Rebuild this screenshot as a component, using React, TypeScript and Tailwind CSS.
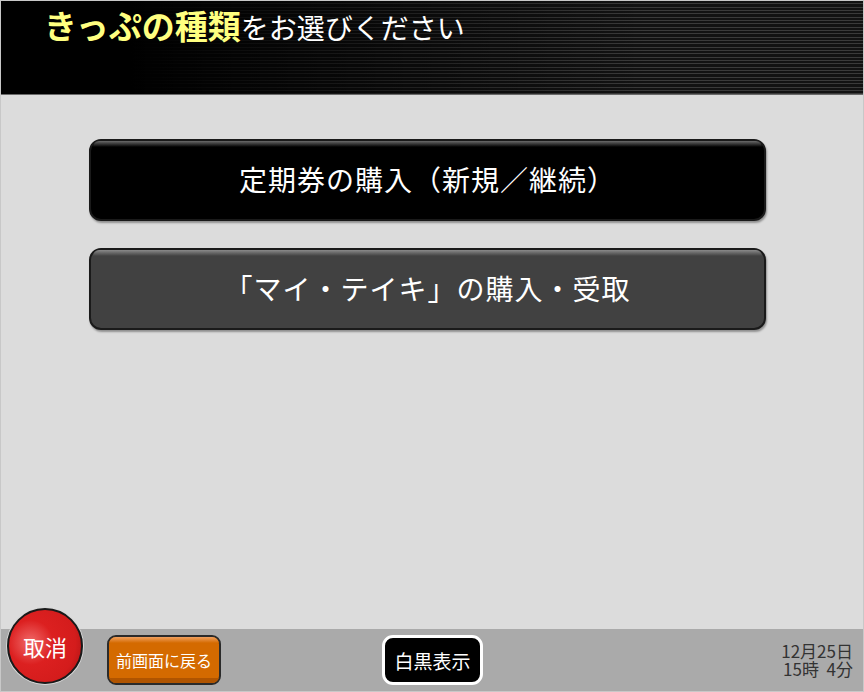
import React from 'react';

const jp = "font-['Noto_Sans_CJK_JP','Noto_Sans',sans-serif]";

const MenuButton: React.FC<{ label: string; dark?: boolean }> = ({ label, dark }) => (
  <button
    className={`relative h-[82px] w-full rounded-[12px] border-2 border-[#1a1a1a] shadow-[1px_2px_2px_rgba(0,0,0,0.35)] ${
      dark ? 'bg-black' : 'bg-[#414141]'
    }`}
  >
    {/* top highlight */}
    <div
      className={`absolute inset-x-[2px] top-0 h-[6px] rounded-t-[10px] ${
        dark ? 'bg-[linear-gradient(to_bottom,#6a6a6a,#000)]' : 'bg-[linear-gradient(to_bottom,#8a8a8a,#414141)]'
      }`}
    ></div>
    <span className="relative text-[28px] leading-none tracking-[1px] text-white">{label}</span>
  </button>
);

export default function App() {
  return (
    <div className={`flex h-[692px] w-[864px] flex-col border border-[#c8c8c8] bg-[#dcdcdc] ${jp}`}>
      {/* Header */}
      <div className="h-[94px] shrink-0 border-b border-[#6a6a6a] bg-[linear-gradient(to_right,#000_15%,rgba(0,0,0,0)_75%),repeating-linear-gradient(to_bottom,#121212_0px,#121212_2.3px,#3a3a3a_2.3px,#3a3a3a_3.33px)] pl-[43px] pt-[4px]">
        <h1 className="flex items-baseline leading-[40px]">
          <span className="text-[33px] font-bold text-[#ffff80]">きっぷの種類</span>
          <span className="text-[28px] text-white">をお選びください</span>
        </h1>
      </div>

      {/* Menu */}
      <div className="flex flex-1 flex-col gap-[27px] pl-[88px] pr-[97px] pt-[44px]">
        <MenuButton label="定期券の購入（新規／継続）" dark />
        <MenuButton label="「マイ・テイキ」の購入・受取" />
      </div>

      {/* Footer */}
      <div className="relative flex h-[62px] shrink-0 items-center bg-[#aaaaaa] pr-[10px]">
        <button className="absolute left-[6px] top-[-21px] flex h-[76px] w-[76px] items-center justify-center rounded-full border-[2px] border-[#1a1a1a] bg-[radial-gradient(circle_at_30%_45%,#f06a6a_0%,#dc2020_35%,#d41c1c_70%,#9c1010_100%)] shadow-[0_0_0_1px_#d8d8d8]">
          <span className="text-[22px] leading-none text-white">取消</span>
        </button>

        <button className="relative ml-[106px] h-[50px] w-[114px] overflow-hidden rounded-[9px] border-2 border-[#2a2a2a] bg-[#d46a00]">
          <div className="absolute inset-x-0 top-0 h-[6px] bg-[linear-gradient(to_bottom,#f0a060,#d46a00)]"></div>
          <div className="absolute inset-x-0 bottom-0 h-[5px] bg-[#b05400]"></div>
          <span className="relative text-[16px] leading-none text-white">前画面に戻る</span>
        </button>

        <button className="ml-[161px] flex h-[50px] w-[101px] items-center justify-center rounded-[11px] border-[3px] border-white bg-black">
          <span className="text-[19px] leading-none text-white">白黒表示</span>
        </button>

        <div className="ml-auto flex flex-col items-end text-[17px] leading-[18px] text-[#333]">
          <span>12月25日</span>
          <span>15時&nbsp;&nbsp;4分</span>
        </div>
      </div>
    </div>
  );
}
